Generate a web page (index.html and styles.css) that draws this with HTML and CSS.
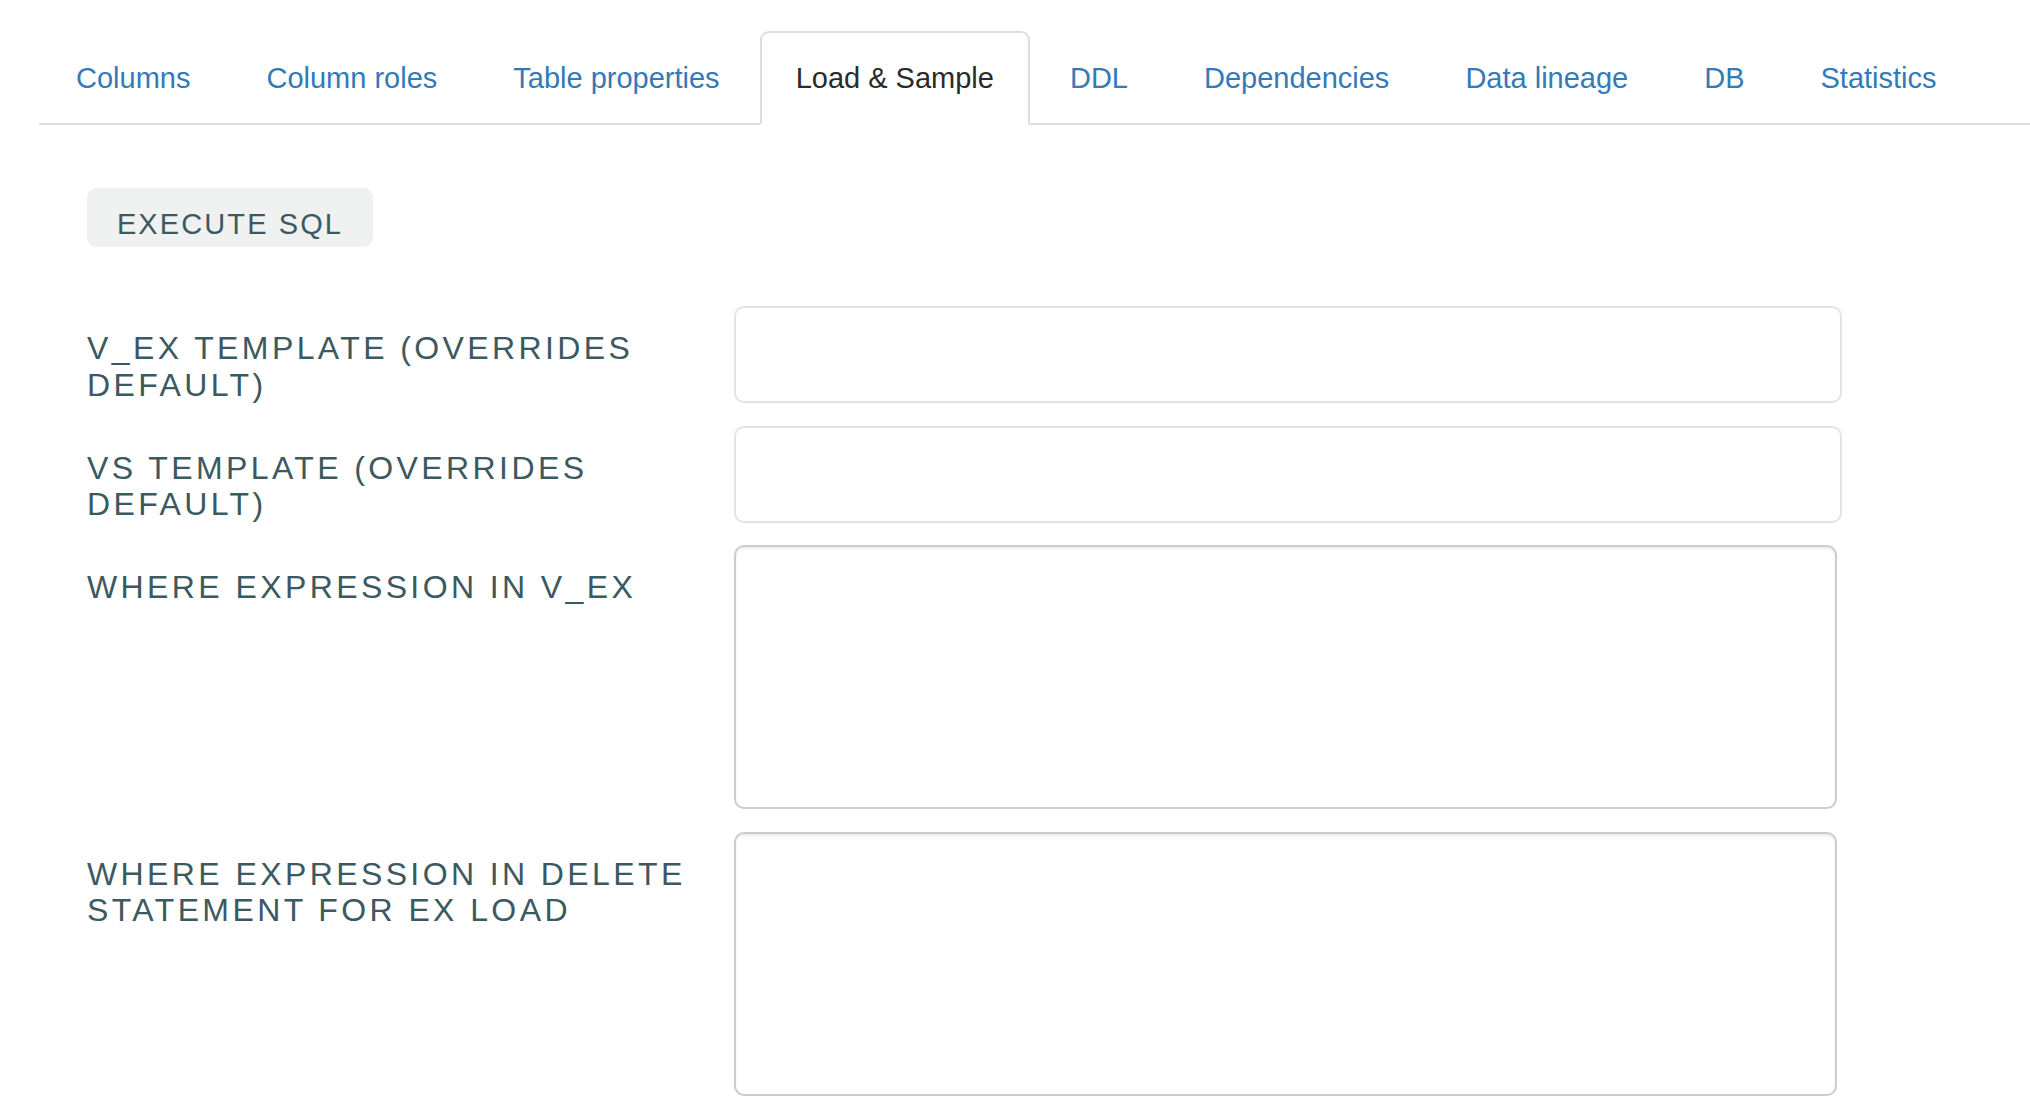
FILE: index.html
```html
<!DOCTYPE html>
<html lang="en">
<head>
<meta charset="utf-8">
<title>Load &amp; Sample</title>
<link rel="stylesheet" href="styles.css">
</head>
<body>
<div class="page">
  <ul class="tabs">
    <li class="tab"><a href="#">Columns</a></li>
    <li class="tab"><a href="#">Column roles</a></li>
    <li class="tab"><a href="#">Table properties</a></li>
    <li class="tab active"><a href="#">Load &amp; Sample</a></li>
    <li class="tab"><a href="#">DDL</a></li>
    <li class="tab"><a href="#">Dependencies</a></li>
    <li class="tab"><a href="#">Data lineage</a></li>
    <li class="tab"><a href="#">DB</a></li>
    <li class="tab"><a href="#">Statistics</a></li>
  </ul>
  <div class="pane">
    <button class="btn" type="button">Execute SQL</button>
    <div class="form">
      <div class="row">
        <label class="lbl">V_EX template (overrides default)</label>
        <input class="field" type="text">
      </div>
      <div class="row">
        <label class="lbl">VS template (overrides default)</label>
        <input class="field" type="text">
      </div>
      <div class="row">
        <label class="lbl">Where expression in V_EX</label>
        <textarea class="area"></textarea>
      </div>
      <div class="row">
        <label class="lbl">Where expression in delete statement for EX load</label>
        <textarea class="area"></textarea>
      </div>
    </div>
  </div>
</div>
</body>
</html>
```
FILE: styles.css
```css
html, body {
  margin: 0;
  padding: 0;
  background: #ffffff;
}
body {
  font-family: "Liberation Sans", Arial, sans-serif;
  color: #333333;
}
.page {
  padding: 31px 0 0 39px;
}
.tabs {
  display: flex;
  list-style: none;
  margin: 0;
  padding: 0;
  border-bottom: 2px solid #dddddd;
}
.tab {
  margin-right: 4px;
  margin-bottom: -2px;
}
.tab a {
  display: block;
  padding: 25px 34px;
  line-height: 40px;
  font-size: 29px;
  color: #337ab7;
  text-decoration: none;
  border: 2px solid transparent;
  border-radius: 9px 9px 0 0;
}
.tab:first-child a {
  padding-left: 35px;
}
.tab.active a {
  color: #2a2a2a;
  background: #ffffff;
  border-color: #dddddd;
  border-bottom-color: transparent;
}
.pane {
  padding-left: 48px;
}
.btn {
  display: block;
  box-sizing: border-box;
  margin: 63px 0 0 0;
  width: 286px;
  height: 59px;
  padding: 12px 0 0 0;
  line-height: 40px;
  border: 0;
  border-radius: 9px;
  background: #eff1f1;
  font-family: "Liberation Sans", Arial, sans-serif;
  font-size: 29px;
  letter-spacing: 2.1px;
  text-transform: uppercase;
  color: #3b5961;
  text-align: center;
  vertical-align: top;
}
.form {
  display: flex;
  flex-direction: column;
  gap: 22.5px;
  margin-top: 59px;
}
.row {
  display: grid;
  grid-template-columns: 647px auto;
  align-items: start;
}
.lbl {
  padding: 24px 20px 0 0;
  font-size: 32px;
  line-height: 36.5px;
  letter-spacing: 3.4px;
  text-transform: uppercase;
  color: #3b5961;
}
.field {
  display: block;
  box-sizing: border-box;
  width: 1108px;
  height: 97px;
  margin: 0;
  padding: 0 20px;
  border: 2px solid #e3e3e3;
  border-radius: 10px;
  background: #ffffff;
  font-family: "Liberation Sans", Arial, sans-serif;
  font-size: 28px;
  outline: none;
}
.area {
  display: block;
  box-sizing: border-box;
  width: 1103px;
  height: 264px;
  margin: 0;
  padding: 12px 20px;
  border: 2px solid #cccccc;
  border-radius: 10px;
  box-shadow: inset 0 2px 2px rgba(0, 0, 0, 0.075);
  background: #ffffff;
  font-family: "Liberation Sans", Arial, sans-serif;
  font-size: 28px;
  resize: none;
  outline: none;
}
```
